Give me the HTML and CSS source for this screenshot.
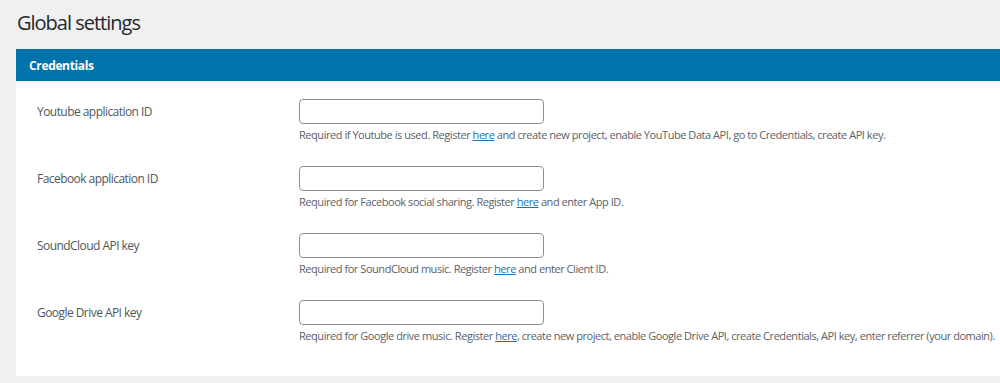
FILE: index.html
```html
<!DOCTYPE html>
<html lang="en">
<head>
<meta charset="utf-8">
<title>Global settings</title>
<link rel="stylesheet" href="styles.css">
</head>
<body>
<div class="wrap">
  <h1 class="page-title">Global settings</h1>
  <section class="panel">
    <h2 class="panel-head">Credentials</h2>
    <div class="panel-body">
      <div class="row">
        <label class="row-label" for="yt">Youtube application ID</label>
        <div class="row-field">
          <input class="text-input" id="yt" type="text">
          <p class="desc">Required if Youtube is used. Register <a href="#">here</a> and create new project, enable YouTube Data API, go to Credentials, create API key.</p>
        </div>
      </div>
      <div class="row">
        <label class="row-label" for="fb">Facebook application ID</label>
        <div class="row-field">
          <input class="text-input" id="fb" type="text">
          <p class="desc">Required for Facebook social sharing. Register <a href="#">here</a> and enter App ID.</p>
        </div>
      </div>
      <div class="row">
        <label class="row-label" for="sc">SoundCloud API key</label>
        <div class="row-field">
          <input class="text-input" id="sc" type="text">
          <p class="desc">Required for SoundCloud music. Register <a href="#">here</a> and enter Client ID.</p>
        </div>
      </div>
      <div class="row">
        <label class="row-label" for="gd">Google Drive API key</label>
        <div class="row-field">
          <input class="text-input" id="gd" type="text">
          <p class="desc">Required for Google drive music. Register <a href="#">here</a>, create new project, enable Google Drive API, create Credentials, API key, enter referrer (your domain).</p>
        </div>
      </div>
    </div>
  </section>
</div>
</body>
</html>
```
FILE: styles.css
```css
* { box-sizing: border-box; }
html, body { margin: 0; padding: 0; }
body {
  background: #f0f0f1;
  font-family: "Open Sans", "Noto Sans", sans-serif;
  color: #3c434a;
  width: 1000px;
  height: 383px;
  overflow: hidden;
}
.wrap {
  padding: 0 0 0 16px;
  width: 1040px;
}
.page-title {
  margin: 0;
  padding: 10px 0 0 1px;
  height: 49px;
  font-size: 20px;
  font-weight: 400;
  letter-spacing: -1px;
  color: #23282d;
  line-height: 26px;
}
.panel {
  background: #fff;
}
.panel-head {
  margin: 0;
  background: #0073aa;
  border-top: 1px solid #1b6a92;
  height: 32px;
  color: #fff;
  font-size: 12px;
  font-weight: 700;
  letter-spacing: -0.35px;
  line-height: 32px;
  padding: 0 0 0 13px;
}
.panel-body {
  padding: 18px 0 12px 21px;
  height: 295px;
}
.row {
  display: flex;
  height: 67px;
}
.row-label {
  flex: 0 0 262px;
  width: 262px;
  font-size: 12px;
  letter-spacing: -0.55px;
  line-height: 26px;
  color: #50575e;
}
.row-field {
  display: flex;
  flex-direction: column;
}
.text-input {
  width: 245px;
  height: 25px;
  border: 1px solid #8c8f94;
  border-radius: 4px;
  margin: 0;
  padding: 0 8px;
  background: #fff;
}
.desc {
  margin: 3px 0 0;
  font-size: 11px;
  letter-spacing: -0.45px;
  line-height: 16px;
  color: #5b6167;
  white-space: nowrap;
}
.desc a {
  color: #2271b1;
}
```
